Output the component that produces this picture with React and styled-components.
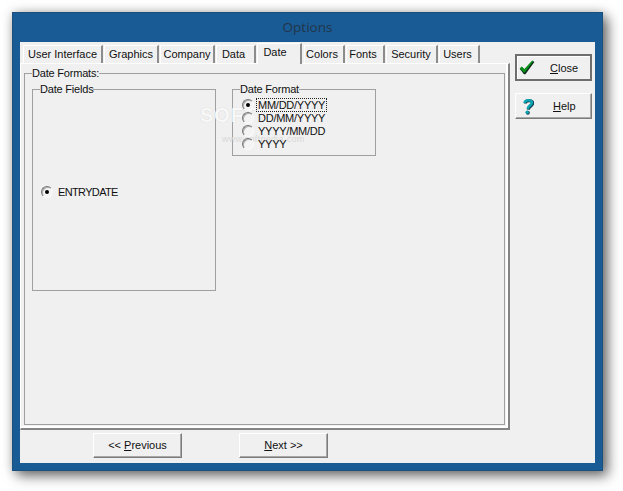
import React from 'react';
import styled, { createGlobalStyle } from 'styled-components';

const GlobalStyle = createGlobalStyle`
  html, body {
    margin: 0;
    padding: 0;
    background: #fff;
  }
  body {
    font-family: 'Liberation Sans', Arial, sans-serif;
    font-size: 11px;
    color: #111;
  }
`;

const Page = styled.div`
  width: 623px;
  height: 491px;
  padding: 12px 0 0 12px;
  box-sizing: border-box;
  overflow: hidden;
`;

const Window = styled.div`
  width: 591px;
  height: 459px;
  box-sizing: border-box;
  padding: 0 7px 7px;
  background: #195b94;
  border: 1px solid #1a4f7e;
  box-shadow: 5px 5px 12px rgba(0, 0, 0, 0.55), 0 0 10px rgba(0, 0, 0, 0.18);
  display: flex;
  flex-direction: column;
`;

const TitleBar = styled.div`
  height: 29px;
  line-height: 28px;
  flex: none;
  text-align: center;
  font-family: 'Open Sans', sans-serif;
  font-size: 13.5px;
  color: #22354a;
`;

const Client = styled.div`
  flex: 1;
  display: flex;
  background: #f0f0f0;
`;

const MainColumn = styled.div`
  width: 490px;
  flex: none;
  display: flex;
  flex-direction: column;
`;

const TabRow = styled.div`
  height: 21px;
  box-sizing: border-box;
  padding: 3px 0 0 3px;
  display: flex;
  align-items: flex-end;
  gap: 1px;
  flex: none;
`;

const Tab = styled.div`
  width: ${(p) => p.$width}px;
  height: ${(p) => (p.$active ? 21 : 18)}px;
  margin: ${(p) => (p.$active ? '0 1px -1px 0' : '0')};
  padding-right: ${(p) => p.$nudge || 0}px;
  box-sizing: border-box;
  border-top: 1px solid #fff;
  border-left: 1px solid #fff;
  border-right: 2px solid #8c8c8c;
  background: #f0f0f0;
  text-align: center;
  line-height: ${(p) => (p.$active ? 17 : 16)}px;
  white-space: nowrap;
  position: relative;
  z-index: ${(p) => (p.$active ? 1 : 0)};
`;

const TabPanel = styled.div`
  height: 367px;
  box-sizing: border-box;
  padding: 3px;
  flex: none;
  border-top: 1px solid #fff;
  border-left: 1px solid #fff;
  border-right: 2px solid #858585;
  border-bottom: 2px solid #858585;
  box-shadow: inset -2px -2px 0 #fff;
`;

const Group = styled.fieldset`
  margin: 0;
  min-width: 0;
  box-sizing: border-box;
  border: 1px solid #a0a0a0;
  padding: 0 0 0 7px;
  width: ${(p) => p.$width || 'auto'};
  height: ${(p) => p.$height};
  display: flex;
`;

const Legend = styled.legend`
  padding: 0;
  height: 13px;
  line-height: 13px;
  letter-spacing: -0.2px;
`;

const GroupRow = styled.div`
  display: flex;
  gap: 16px;
  align-items: flex-start;
  padding-top: 3px;
`;

const OptionList = styled.div`
  display: flex;
  flex-direction: column;
  justify-content: ${(p) => (p.$centered ? 'center' : 'flex-start')};
  padding: ${(p) => p.$top || 0}px 0 ${(p) => p.$bottom || 0}px ${(p) => p.$left || 0}px;
  width: 100%;
`;

const Option = styled.label`
  display: flex;
  align-items: center;
  height: 13px;
  gap: ${(p) => p.$gap}px;
  position: relative;
  z-index: 1;
`;

const Radio = styled.span`
  width: 12px;
  height: 12px;
  flex: none;
  box-sizing: border-box;
  border-radius: 50%;
  border: 1px solid;
  border-color: #777 #fafafa #fafafa #777;
  background: #f4f4f4;
  box-shadow: inset 1px 1px 0 #b0b0b0;
  display: flex;
  align-items: center;
  justify-content: center;

  &::after {
    content: '';
    display: ${(p) => (p.$checked ? 'block' : 'none')};
    width: 4px;
    height: 4px;
    border-radius: 50%;
    background: #000;
  }
`;

const OptionText = styled.span`
  padding: 0 1px;
  letter-spacing: ${(p) => p.$tracking}px;
  outline: ${(p) => (p.$focused ? '1px dotted #222' : 'none')};
  line-height: 12px;
`;

const Watermark = styled.div`
  position: absolute;
  left: 200px;
  top: 104px;
  font-size: 20px;
  font-weight: bold;
  letter-spacing: 1px;
  color: #f8f8f8;
  text-shadow: 0 0 1px #c8c8c8;
  pointer-events: none;
`;

const WatermarkUrl = styled.div`
  position: absolute;
  left: 222px;
  top: 134px;
  font-size: 9px;
  letter-spacing: 0.3px;
  color: #d8d8d8;
  pointer-events: none;
`;

const Footer = styled.div`
  flex: 1;
  display: flex;
  gap: 57px;
  padding: 3px 0 0 73px;
  align-items: flex-start;
`;

const Button = styled.button`
  font: inherit;
  color: #111;
  background: #f0f0f0;
  padding: 0 0 2px;
  margin: 0;
  box-sizing: border-box;
  width: 89px;
  height: 25px;
  border: 1px solid;
  border-color: #fff #7c7c7c #7c7c7c #fff;
  box-shadow: inset -1px -1px 0 #a8a8a8;
`;

const SideColumn = styled.div`
  display: flex;
  flex-direction: column;
  gap: 12px;
  padding: 12px 0 0 5px;
`;

const SideButton = styled(Button)`
  width: 77px;
  height: ${(p) => (p.$primary ? 27 : 26)}px;
  display: flex;
  align-items: center;
  padding: 0 0 0 ${(p) => (p.$primary ? 2 : 6)}px;
  ${(p) =>
    p.$primary &&
    `
    border: 2px solid #6e6e6e;
    box-shadow: inset 1px 1px 0 #fff;
  `}
`;

const SideLabel = styled.span`
  margin-left: ${(p) => p.$offset}px;
`;

const Key = styled.span`
  text-decoration: underline;
`;

const CheckIcon = () => (
  <svg width="16" height="15" viewBox="0 0 16 15">
    <path d="M0.8 9 L3 7 L5.6 9.6 L13.6 0.8 L15.4 2 L6.4 14.2 L5 14.2 Z" fill="#0b2a1c" />
    <path d="M0.6 8.4 L2.6 6.6 L5.4 9 L13.2 0.6 L14.2 1.4 L5.8 12.6 L4.8 12.6 Z" fill="#0c8f1a" />
  </svg>
);

const HelpIcon = () => (
  <svg width="12" height="17" viewBox="0 0 12 17">
    <path d="M2.6 5 C2.6 1.6 10 1.2 10 4.6 C10 7.4 6 7.4 5.6 11" fill="none" stroke="#10384a" strokeWidth="3" transform="translate(0.8 0.6)" />
    <path d="M2.6 5 C2.6 1.6 10 1.2 10 4.6 C10 7.4 6 7.4 5.6 11" fill="none" stroke="#0ba3b0" strokeWidth="2.6" />
    <circle cx="5.8" cy="14.8" r="2" fill="#10384a" />
    <circle cx="5.2" cy="14.2" r="1.7" fill="#0ba3b0" />
  </svg>
);

const tabs = [
  { label: 'User Interface', width: 80 },
  { label: 'Graphics', width: 55 },
  { label: 'Company', width: 55 },
  { label: 'Data', width: 40, nudge: 4 },
  { label: 'Date', width: 45, active: true, nudge: 8 },
  { label: 'Colors', width: 41, nudge: 4 },
  { label: 'Fonts', width: 39, nudge: 4 },
  { label: 'Security', width: 52, nudge: 1 },
  { label: 'Users', width: 41, nudge: 3 },
];

const formats = ['MM/DD/YYYY', 'DD/MM/YYYY', 'YYYY/MM/DD', 'YYYY'];

export default function App() {
  return (
    <Page>
      <GlobalStyle />
      <Window>
        <TitleBar>Options</TitleBar>
        <Client>
          <MainColumn>
            <TabRow>
              {tabs.map((tab) => (
                <Tab key={tab.label} $width={tab.width} $active={tab.active} $nudge={tab.nudge}>
                  {tab.label}
                </Tab>
              ))}
            </TabRow>
            <TabPanel>
              <Group $height="358px">
                <Legend>Date Formats:</Legend>
                <GroupRow>
                  <Group $width="184px" $height="208px">
                    <Legend>Date Fields</Legend>
                    <OptionList $centered $bottom={2} $left={1}>
                      <Option $gap={4}>
                        <Radio $checked />
                        <OptionText $tracking={-0.65}>ENTRYDATE</OptionText>
                      </Option>
                    </OptionList>
                  </Group>
                  <Group $width="144px" $height="73px">
                    <Legend>Date Format</Legend>
                    <OptionList $top={2} $left={2}>
                      {formats.map((format, i) => (
                        <Option key={format} $gap={3}>
                          <Radio $checked={i === 0} />
                          <OptionText $focused={i === 0} $tracking={-0.25}>{format}</OptionText>
                        </Option>
                      ))}
                    </OptionList>
                  </Group>
                </GroupRow>
              </Group>
            </TabPanel>
            <Footer>
              <Button>
                &lt;&lt; <Key>P</Key>revious
              </Button>
              <Button>
                <Key>N</Key>ext &gt;&gt;
              </Button>
            </Footer>
          </MainColumn>
          <SideColumn>
            <SideButton $primary>
              <CheckIcon />
              <SideLabel $offset={15}>
                <Key>C</Key>lose
              </SideLabel>
            </SideButton>
            <SideButton>
              <HelpIcon />
              <SideLabel $offset={19}>
                <Key>H</Key>elp
              </SideLabel>
            </SideButton>
          </SideColumn>
        </Client>
      </Window>
      <Watermark>SOFTPEDIA</Watermark>
      <WatermarkUrl>www.softpedia.com</WatermarkUrl>
    </Page>
  );
}
